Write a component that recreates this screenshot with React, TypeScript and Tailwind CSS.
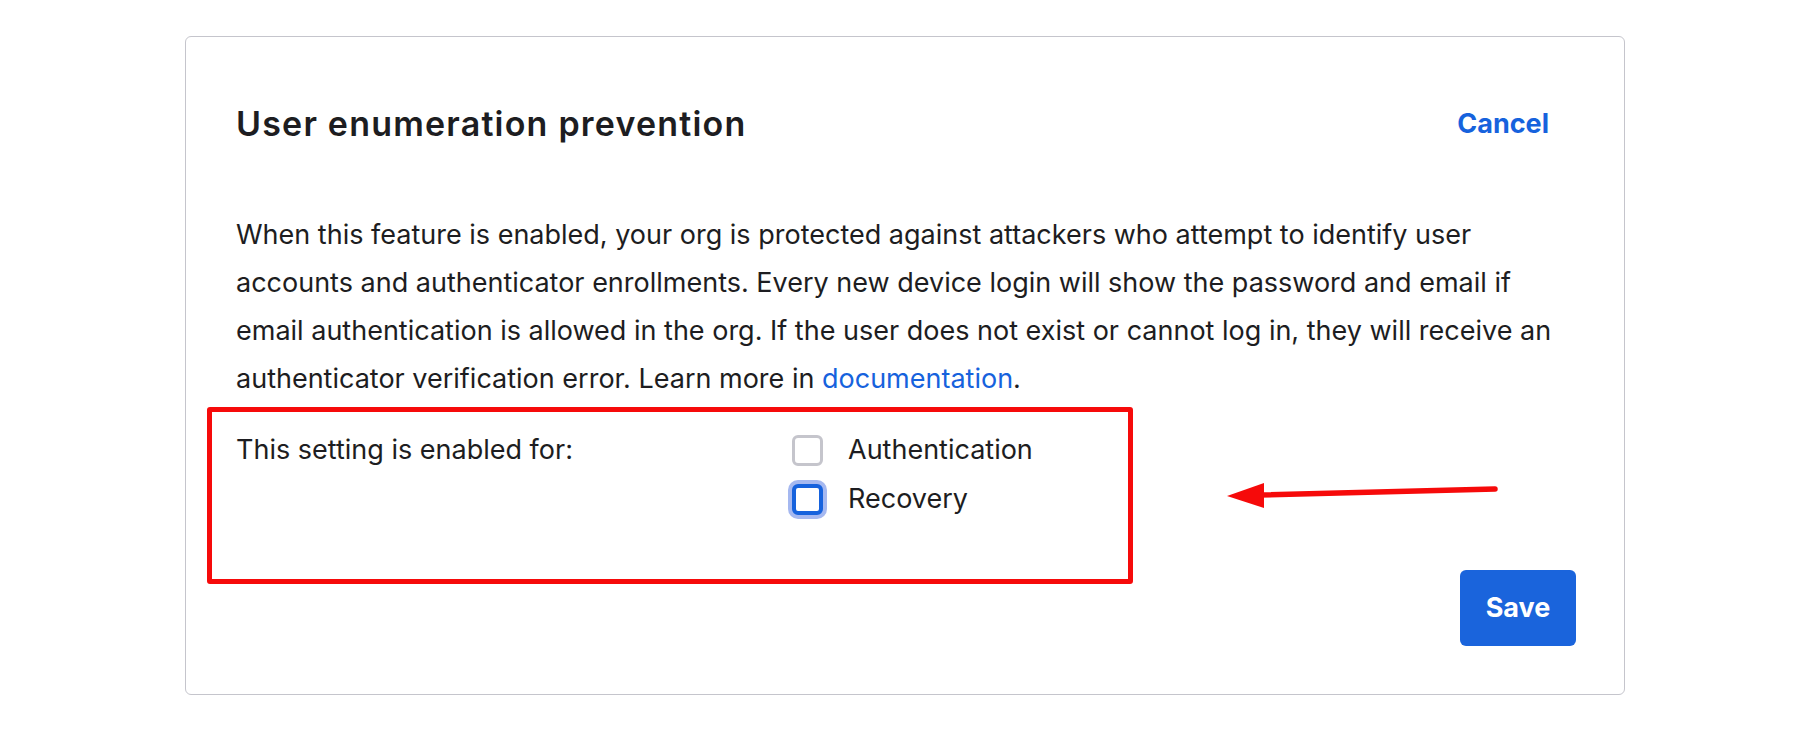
import { useState } from 'react';

export default function App() {
    const [auth, setAuth] = useState(false);
    const [recovery, setRecovery] = useState(false);

    return (
        <div
            className="relative w-[1794px] h-[738px] bg-white pl-[185px] pt-[36px] text-[#1d1d21]"
            style={{ fontFamily: 'Inter, "Liberation Sans", sans-serif' }}
        >
            <div className="flex flex-col w-[1440px] h-[659px] border border-[#c5c5cc] rounded-[6px] bg-white">
                {/* header */}
                <div className="flex items-center justify-between pl-[50px] pr-[75px] pt-[67px]">
                    <h2 className="text-[34px] leading-[40px] font-semibold tracking-[1.2px]">
                        User enumeration prevention
                    </h2>
                    <button className="text-[27px] leading-[40px] font-bold text-[#1662dd]">Cancel</button>
                </div>

                <p className="pl-[50px] pt-[67px] text-[27px] leading-[48px]">
                    When this feature is enabled, your org is protected against attackers who attempt to identify user
                    <br />
                    accounts and authenticator enrollments. Every new device login will show the password and email if
                    <br />
                    email authentication is allowed in the org. If the user does not exist or cannot log in, they will receive an
                    <br />
                    authenticator verification error. Learn more in{' '}
                    <a className="text-[#1662dd]" href="#">documentation</a>.
                </p>

                {/* highlighted settings */}
                <div className="ml-[21px] mt-[4px] w-[926px] h-[177px] border-[5px] border-[#f60a0a] rounded-[3px] pl-[24px] pt-[14px]">
                    <div className="flex text-[27px] leading-[48px]">
                        <div className="w-[556px]">This setting is enabled for:</div>
                        <div className="flex flex-col gap-[1px]">
                            <label className="flex items-center gap-[25px] h-[48px] cursor-pointer">
                                <span
                                    onClick={() => setAuth(!auth)}
                                    className={`w-[31px] h-[31px] rounded-[6px] border-[3.5px] bg-white ${auth ? 'border-[#1662dd]' : 'border-[#c5c5cc]'}`}
                                />
                                Authentication
                            </label>
                            <label className="flex items-center gap-[25px] h-[48px] cursor-pointer">
                                <span
                                    onClick={() => setRecovery(!recovery)}
                                    className="w-[31px] h-[31px] rounded-[6px] border-[4px] border-[#1662dd] bg-white ring-[4px] ring-[#a5b8f0]"
                                />
                                Recovery
                            </label>
                        </div>
                    </div>
                </div>

                {/* footer */}
                <div className="flex justify-end pr-[48px] mt-[-14px]">
                    <button className="w-[116px] h-[76px] rounded-[6px] bg-[#1a64dc] text-white text-[27px] font-bold">
                        Save
                    </button>
                </div>
            </div>

            {/* annotation arrow */}
            <svg className="absolute left-0 top-0 pointer-events-none" width="1794" height="738">
                <line x1="1495" y1="489" x2="1258" y2="495" stroke="#f60a0a" strokeWidth="5.5" strokeLinecap="round" />
                <polygon points="1227,496 1264,483 1264,508" fill="#f60a0a" />
            </svg>
        </div>
    );
}
